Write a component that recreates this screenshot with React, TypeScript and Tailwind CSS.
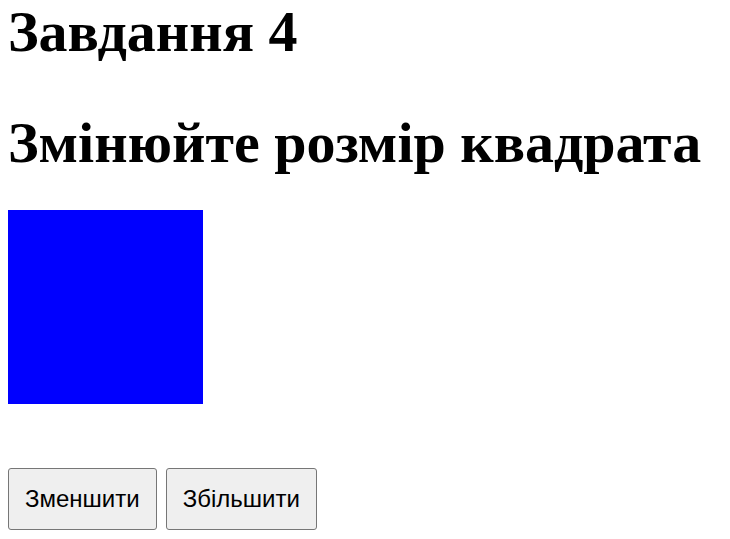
export default function App() {
  return (
    <div className="bg-white w-[730px] h-[539px] pl-2 text-black">
      <h1 className="font-['Liberation_Serif',serif] font-bold text-[58px] leading-[64px] m-0">Завдання 4</h1>
      <h2 className="font-['Liberation_Serif',serif] font-bold text-[58px] leading-[64px] mt-[47px]">Змінюйте розмір квадрата</h2>
      <div className="w-[195px] h-[194px] bg-[#0000ff] mt-[35px]"></div>
      <div className="flex gap-[9px] mt-[64px]">
        <button className="h-[62px] px-[16px] border border-[#767676] rounded-[3px] bg-[#efefef] font-['Liberation_Sans',Arial,sans-serif] text-[24px] leading-none">Зменшити</button>
        <button className="h-[62px] px-[16px] border border-[#767676] rounded-[3px] bg-[#efefef] font-['Liberation_Sans',Arial,sans-serif] text-[24px] leading-none">Збільшити</button>
      </div>
    </div>
  );
}
